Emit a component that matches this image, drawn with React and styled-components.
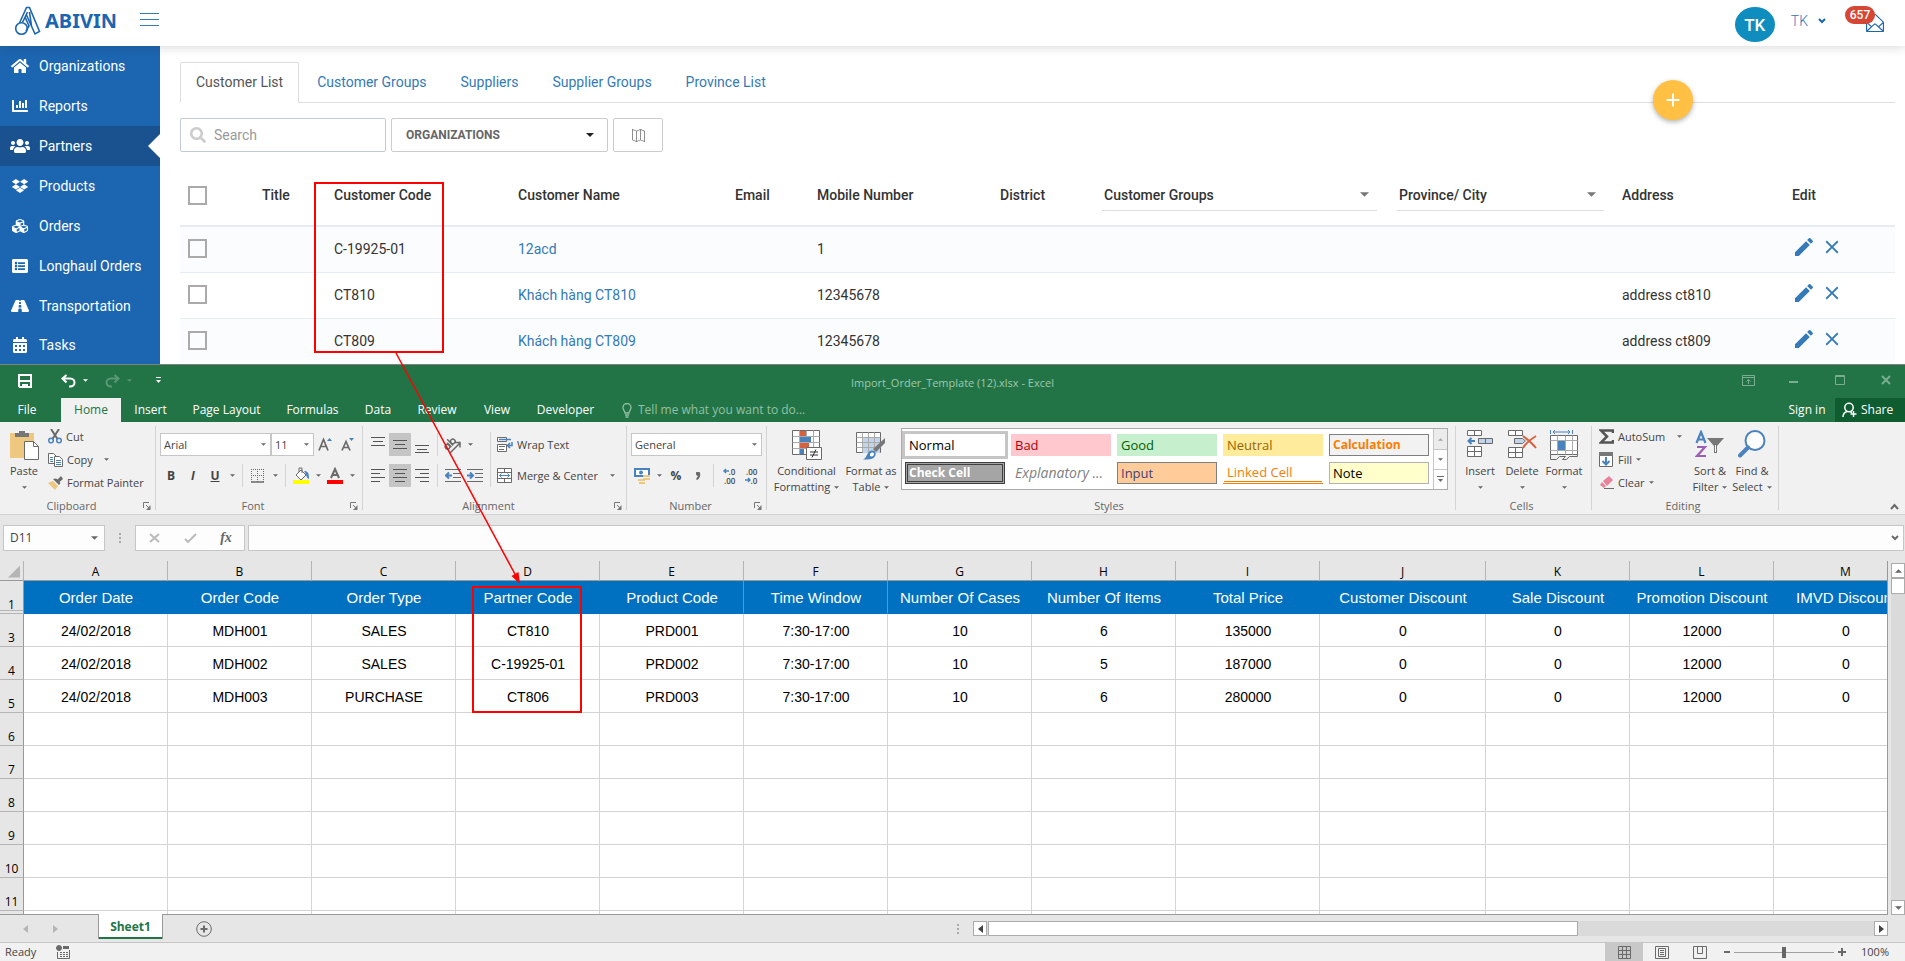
import React from 'react';
import styled, { createGlobalStyle, css } from 'styled-components';
import {
  FaHome,
  FaChartBar,
  FaUsers,
  FaDropbox,
  FaCubes,
  FaListAlt,
  FaRoad,
  FaCalendarAlt,
  FaSearch,
} from 'react-icons/fa';
import { MdEdit, MdClose, MdAdd } from 'react-icons/md';
import { SlMap, SlEnvelopeOpen } from 'react-icons/sl';

const colors = {
  brand: '#1c65b0',
  brandDark: '#19528f',
  link: '#337ab7',
  excel: '#227447',
  excelDark: '#0e5c2f',
  ribbon: '#f1f1f1',
  chrome: '#e6e6e6',
  line: '#d4d4d4',
  icon: '#6a6a6a',
  blue: '#4a82bd',
  sheetBlue: '#0070c0',
};

const GlobalStyle = createGlobalStyle`
  *, *::before, *::after {
    box-sizing: border-box;
  }
  body {
    margin: 0;
    background: #fff;
    font-family: Roboto, sans-serif;
    font-size: 14px;
  }
  button, input, select {
    font: inherit;
    color: inherit;
    margin: 0;
    padding: 0;
    border: 0;
    background: none;
  }
  svg {
    display: block;
    flex: none;
  }
`;

const Page = styled.div`
  position: relative;
  overflow: hidden;
`;

/* ---------- partner portal ---------- */

const Header = styled.header`
  position: relative;
  z-index: 1;
  display: flex;
  align-items: center;
  height: 46px;
  padding: 0 21px 0 14px;
  background: #fff;
  box-shadow: 0 1px 10px rgba(50, 50, 50, 0.2);
`;

const Brand = styled.a`
  display: flex;
  align-items: center;
  gap: 4px;
  height: 40px;
  padding-bottom: 5px;
  color: ${colors.brand};
  font: bold 20px 'Noto Sans', sans-serif;
  text-decoration: none;
`;

const MenuToggle = styled.button`
  display: grid;
  gap: 5px;
  width: 19px;
  margin: 0 auto 7px 23px;
  span {
    height: 1px;
    background: ${colors.link};
  }
`;

const Avatar = styled.span`
  display: grid;
  place-items: center;
  width: 40px;
  height: 35px;
  margin-top: 3px;
  border-radius: 50%;
  background: #0f8dbf;
  color: #fff;
  font-size: 17px;
  font-weight: 500;
`;

const UserMenu = styled.button`
  display: flex;
  align-items: center;
  gap: 10px;
  margin: 0 19px 4px 16px;
  color: ${colors.link};
  font-weight: 300;
`;

const Inbox = styled.button`
  display: flex;
  align-items: flex-start;
  height: 34px;
  color: ${colors.brand};
  svg {
    margin: 8px 0 0 -9px;
  }
`;

const Badge = styled.span`
  position: relative;
  z-index: 1;
  width: 30px;
  border-radius: 9px;
  background: #d64635;
  color: #fff;
  font-size: 12px;
  font-weight: 500;
  line-height: 18px;
`;

const Portal = styled.div`
  display: flex;
`;

const Sidebar = styled.nav`
  display: grid;
  grid-template-rows: repeat(7, 40px) 1fr;
  flex: none;
  width: 160px;
  background: ${colors.brand};
`;

const SideLink = styled.a`
  position: relative;
  display: flex;
  align-items: center;
  gap: 9px;
  padding-left: 10px;
  color: #fff;
  text-decoration: none;
  svg {
    width: 20px;
    height: 16px;
  }
  ${({ $active }) =>
    $active &&
    css`
      background: ${colors.brandDark};
      &::after {
        content: '';
        position: absolute;
        right: 0;
        width: 12px;
        height: 24px;
        background: #fff;
        clip-path: polygon(100% 0, 0 50%, 100% 100%);
      }
    `}
`;

const Main = styled.main`
  position: relative;
  flex: 1;
  min-width: 0;
  padding: 16px 10px 0 20px;
`;

const Tabs = styled.div`
  display: flex;
  border-bottom: 1px solid #ddd;
`;

const Tab = styled.a`
  height: 41px;
  margin: 0 2px -1px 0;
  padding: 0 15px;
  border: 1px solid transparent;
  border-radius: 2px 2px 0 0;
  color: ${colors.link};
  line-height: 38px;
  text-decoration: none;
  ${({ $active }) =>
    $active &&
    css`
      border-color: #ddd #ddd #fff;
      background: #fff;
      color: #555;
    `}
`;

const AddButton = styled.button`
  position: absolute;
  top: 34px;
  right: 212px;
  display: grid;
  place-items: center;
  width: 40px;
  height: 40px;
  border-radius: 50%;
  background: #ffc043;
  color: #fff;
  box-shadow: 0 2px 5px rgba(0, 0, 0, 0.3);
`;

const Filters = styled.div`
  display: flex;
  gap: 5px;
  margin-top: 15px;
`;

const filterBox = css`
  display: flex;
  align-items: center;
  height: 34px;
  border: 1px solid #ccc;
  border-radius: 2px;
  background: #fff;
`;

const SearchBox = styled.label`
  ${filterBox}
  gap: 8px;
  width: 206px;
  padding: 0 9px;
  border-color: #c2cad8;
  color: #ccc;
  input {
    width: 100%;
    outline: 0;
    color: #555;
  }
  input::placeholder {
    color: #999;
  }
`;

const SelectShell = styled.label`
  display: grid;
  align-items: center;
  > * {
    grid-area: 1 / 1;
  }
  > svg {
    justify-self: end;
    pointer-events: none;
  }
  select {
    width: 100%;
    height: 100%;
    appearance: none;
    outline: 0;
  }
`;

const OrgSelect = styled(SelectShell)`
  width: 217px;
  height: 34px;
  border: 1px solid #ccc;
  border-radius: 2px;
  color: #666;
  font-size: 12px;
  font-weight: 700;
  select {
    padding-left: 14px;
  }
  > svg {
    margin-right: 13px;
    color: #222;
  }
`;

const MapButton = styled.button`
  ${filterBox}
  justify-content: center;
  width: 50px;
  color: #777;
`;

const PartnerTable = styled.table`
  width: 100%;
  table-layout: fixed;
  border-collapse: separate;
  border-spacing: 0;
  color: #333;
  th,
  td {
    padding: 0 8px;
    text-align: left;
    white-space: nowrap;
  }
  th {
    height: 75px;
    padding-top: 13px;
    border-bottom: 2px solid #e7ecf1;
    font-weight: 500;
  }
  td {
    height: 46px;
    padding-bottom: 2px;
    border-bottom: 1px solid #e7ecf1;
  }
  tr:last-child td {
    height: 45px;
    border-bottom: 0;
  }
  tbody tr:nth-child(odd) {
    background: #fbfcfd;
  }
  a {
    color: ${colors.link};
    text-decoration: none;
  }
`;

const Tick = styled.input.attrs({ type: 'checkbox' })`
  display: block;
  width: 19px;
  height: 19px;
  appearance: none;
  border: 2px solid #aaa;
`;

const HeadSelect = styled(SelectShell)`
  height: 32px;
  margin-right: ${({ $gap }) => $gap}px;
  border-bottom: 1px solid #ddd;
  select {
    padding-left: 2px;
    font-weight: 500;
  }
  > svg {
    margin-right: 8px;
    color: #777;
  }
`;

const RowActions = styled.div`
  display: flex;
  gap: 5px;
  padding-bottom: 3px;
  color: ${colors.link};
  button {
    display: block;
  }
`;

/* ---------- spreadsheet window ---------- */

const Window = styled.section`
  border-top: 1px solid #808080;
  background: ${colors.chrome};
  font: 12px/16px 'Open Sans', 'Noto Sans', sans-serif;
  color: #444;
`;

const TitleBar = styled.div`
  display: grid;
  grid-template-columns: 1fr auto 1fr;
  align-items: center;
  height: 33px;
  background: ${colors.excel};
  color: #9fc8ae;
  font-size: 11px;
`;

const DocTitle = styled.span`
  padding-top: 3px;
`;

const QuickAccess = styled.div`
  display: flex;
  align-items: center;
  padding: 0 0 2px 18px;
  color: #fff;
`;

const QuickButton = styled.button`
  width: ${({ $width }) => $width}px;
  opacity: ${({ disabled }) => (disabled ? 0.25 : 1)};
`;

const WindowButtons = styled.div`
  display: flex;
  justify-content: flex-end;
  gap: 8px;
  padding-bottom: 3px;
  button {
    display: grid;
    place-items: center;
    width: 38px;
    height: 30px;
  }
`;

const RibbonTabs = styled.div`
  display: flex;
  align-items: stretch;
  height: 24px;
  background: ${colors.excel};
  color: #fff;
`;

const RibbonTab = styled.button`
  width: ${({ $width }) => $width}px;
  white-space: nowrap;
  &:first-child {
    margin-right: 7px;
  }
  ${({ $active }) =>
    $active &&
    css`
      background: ${colors.ribbon};
      color: ${colors.excel};
    `}
`;

const TellMe = styled.label`
  display: flex;
  align-items: center;
  gap: 6px;
  flex: 1;
  padding-left: 15px;
  color: #93c0a5;
  input {
    flex: 1;
    outline: 0;
  }
  input::placeholder {
    color: #93c0a5;
    opacity: 1;
  }
`;

const ShareButton = styled.button`
  display: flex;
  align-items: center;
  gap: 4px;
  width: 70px;
  padding-left: 7px;
  background: ${colors.excelDark};
`;

const Ribbon = styled.div`
  display: flex;
  height: 93px;
  border-bottom: 1px solid #d2d2d2;
  background: ${colors.ribbon};
`;

const Group = styled.div`
  display: flex;
  flex-direction: column;
  flex: none;
  width: ${({ $width }) => $width}px;
`;

const GroupBody = styled.div`
  display: flex;
  height: 74px;
  padding-left: ${({ $pad }) => $pad || 0}px;
`;

const GroupLabel = styled.div`
  display: flex;
  align-items: center;
  height: 18px;
  padding: 2px 4px 0 0;
  color: #666;
  font-size: 11px;
  span {
    flex: 1;
    text-align: center;
  }
`;

const Divider = styled.span`
  flex: none;
  width: 1px;
  margin: ${({ $inset }) => ($inset ? '10px 6px 9px 4px' : '4px 0')};
  background: ${colors.line};
`;

const BigButton = styled.button`
  display: flex;
  flex-direction: column;
  align-items: center;
  flex: none;
  width: ${({ $width }) => $width}px;
  padding-top: 8px;
  font-size: 11px;
  > svg:first-child {
    margin-bottom: 3px;
  }
`;

const BigLine = styled.span`
  display: flex;
  align-items: center;
  gap: 4px;
  height: 16px;
  white-space: nowrap;
`;

const SmallList = styled.div`
  display: flex;
  flex-direction: column;
  padding-top: 3px;
  width: ${({ $width }) => $width}px;
`;

const SmallButton = styled.button`
  display: flex;
  align-items: center;
  gap: 4px;
  height: 23px;
  font-size: 11px;
  white-space: nowrap;
  > svg:nth-of-type(2) {
    margin-left: ${({ $caretGap }) => $caretGap || 0}px;
  }
`;

const ToolRows = styled.div`
  display: flex;
  flex-direction: column;
  gap: 8px;
  padding-top: 11px;
`;

const ToolRow = styled.div`
  display: flex;
  height: 23px;
`;

const Tool = styled.button`
  display: grid;
  place-items: center;
  width: ${({ $narrow }) => ($narrow ? 12 : 22)}px;
  height: 23px;
  background: ${({ $on }) => ($on ? '#c5c5c5' : 'none')};
  font-weight: 700;
`;

const ToolSplit = styled.span`
  width: 1px;
  margin: 0 4px;
  background: ${colors.line};
`;

const Combo = styled(SelectShell)`
  width: ${({ $width }) => $width}px;
  height: 23px;
  border: 1px solid #c6c6c6;
  background: #fff;
  font-size: 11px;
  select {
    padding-left: 3px;
  }
  > svg {
    margin-right: 4px;
  }
`;

const Gallery = styled.div`
  display: flex;
  height: 62px;
  margin: 6px 0 0 1px;
  border: 1px solid #ababab;
  background: #fff;
`;

const Swatches = styled.div`
  display: grid;
  grid-template-columns: repeat(5, 100px);
  grid-auto-rows: 22px;
  gap: 6px;
  padding: 5px 4px 0 3px;
`;

const Swatch = styled.button`
  padding: 0 3px 1px;
  border: 1px solid ${({ $border }) => $border || 'transparent'};
  background: ${({ $bg }) => $bg || '#fff'};
  color: ${({ $color }) => $color || '#000'};
  font-size: 13px;
  text-align: left;
  white-space: nowrap;
  ${({ $picked }) => $picked && 'outline: 3px solid #c5c5c5;'}
  ${({ $bold }) => $bold && 'font-weight: 700; font-size: 12px;'}
  ${({ $italic }) => $italic && 'font-style: italic; font-size: 14px;'}
  ${({ $boxed }) =>
    $boxed && 'border: 1px solid #3f3f3f; box-shadow: inset 0 0 0 1px #a5a5a5, inset 0 0 0 2px #3f3f3f;'}
  ${({ $underlined }) => $underlined && 'border-bottom: 3px double #fa7d00;'}
`;

const GalleryScroll = styled.div`
  display: grid;
  grid-template-rows: 1fr 1fr 1fr;
  width: 14px;
  border-left: 1px solid #c6c6c6;
  button {
    display: grid;
    place-items: center;
  }
  button + button {
    border-top: 1px solid #c6c6c6;
  }
  button:disabled {
    background: #e1e1e1;
    opacity: 0.6;
  }
`;

const Collapse = styled.button`
  align-self: flex-end;
  margin: 0 6px 4px auto;
`;

const FormulaBar = styled.div`
  display: flex;
  height: 46px;
  padding: 10px 1px 10px 3px;
`;

const barBox = css`
  height: 26px;
  border: 1px solid #c6c6c6;
  background: #fdfdfd;
`;

const NameBox = styled(SelectShell)`
  ${barBox}
  width: 102px;
  input {
    width: 100%;
    padding-left: 6px;
    outline: 0;
  }
  > svg {
    margin-right: 6px;
  }
`;

const Grip = styled.span`
  align-self: center;
  width: 2px;
  height: 10px;
  margin: 0 14px;
  background: repeating-linear-gradient(#aaa 0 2px, transparent 2px 4px);
`;

const FormulaButtons = styled.div`
  ${barBox}
  display: flex;
  width: 110px;
  button {
    display: grid;
    place-items: center;
    flex: 1;
  }
`;

const FxButton = styled.button`
  color: #666;
  font: italic bold 14px 'Liberation Serif', serif;
`;

const FormulaInput = styled(SelectShell)`
  ${barBox}
  flex: 1;
  margin-left: 3px;
  input {
    width: 100%;
    padding: 0 20px 0 6px;
    outline: 0;
  }
  > svg {
    margin-right: 4px;
  }
`;

const SheetArea = styled.div`
  display: flex;
`;

const SheetView = styled.div`
  flex: 1;
  min-width: 0;
  height: 354px;
  overflow: hidden;
  border-right: 1px solid #999;
  border-bottom: 1px solid #999;
`;

const Sheet = styled.table`
  width: 1918px;
  table-layout: fixed;
  border-collapse: separate;
  border-spacing: 0;
  color: #000;
  thead th {
    height: 20px;
    padding: 2px 0 0;
    border-right: 1px solid #b5b5b5;
    border-bottom: 1px solid #999;
    background: ${colors.chrome};
    font-weight: 400;
  }
  tbody th {
    height: 33px;
    padding: 0;
    border-right: 1px solid #999;
    border-bottom: 1px solid #b5b5b5;
    background: ${colors.chrome};
    font-weight: 400;
    vertical-align: bottom;
  }
  td {
    padding: 1px 0 0 1px;
    overflow: hidden;
    border-right: 1px solid ${colors.line};
    border-bottom: 1px solid ${colors.line};
    background: #fff;
    font: 14px 'Liberation Sans', sans-serif;
    text-align: center;
    white-space: nowrap;
  }
`;

/* row 2 is hidden, so row 1 ends in a double rule */
const TitleRow = styled.tr`
  && th {
    box-shadow: inset 0 -2px ${colors.chrome}, inset 0 -3px #b5b5b5;
  }
  && td {
    border-color: ${colors.sheetBlue};
    background: ${colors.sheetBlue};
    color: #fff;
    font-size: 15px;
  }
  && td:nth-of-type(5),
  && td:nth-of-type(6) {
    border-right-color: #7f8c99;
  }
`;

const SelectAll = styled.span`
  display: block;
  width: 12px;
  height: 12px;
  margin-left: 8px;
  background: #b5b5b5;
  clip-path: polygon(100% 0, 100% 100%, 0 100%);
`;

const ScrollTrack = styled.div`
  display: flex;
  flex-direction: ${({ $horizontal }) => ($horizontal ? 'row' : 'column')};
  background: #dadada;
  ${({ $horizontal }) => ($horizontal ? 'width: 915px; height: 15px;' : 'width: 14px; margin: 2px 0 0 3px;')}
`;

const ScrollButton = styled.button`
  display: grid;
  place-items: center;
  flex: none;
  width: 14px;
  height: 15px;
  border: 1px solid #ababab;
  background: #fff;
`;

const ScrollThumb = styled.span`
  flex: none;
  border: 1px solid #ababab;
  background: #fff;
  ${({ $horizontal }) => ($horizontal ? 'width: 590px; margin: 0 auto 0 1px;' : 'height: 16px; margin-bottom: auto;')}
`;

const SheetTabs = styled.div`
  display: flex;
  align-items: center;
  height: 27px;
  padding-right: 17px;
`;

const SheetArrow = styled.button`
  width: 30px;
  padding-left: 23px;
  color: #b5b5b5;
`;

const SheetTab = styled.button`
  align-self: flex-start;
  width: 65px;
  height: 25px;
  margin: -1px 33px 0 38px;
  padding-top: 1px;
  border: solid #999;
  border-width: 0 1px;
  box-shadow: inset 0 -2px ${colors.excel};
  background: #fff;
  color: ${colors.excel};
  font-weight: 700;
`;

const AddSheet = styled.button`
  margin-right: auto;
`;

const StatusBar = styled.footer`
  display: flex;
  align-items: center;
  height: 19px;
  padding: 0 16px 0 5px;
  border-top: 1px solid #c6c6c6;
  background: ${colors.ribbon};
  font-size: 11px;
  > svg {
    margin: 0 auto 0 20px;
  }
`;

const ViewButton = styled.button`
  display: grid;
  place-items: center;
  width: 38px;
  height: 18px;
  background: ${({ $on }) => ($on ? '#c8c8c8' : 'none')};
`;

const ZoomButton = styled.button`
  display: grid;
  place-items: center;
  width: ${({ $width }) => $width}px;
  height: 16px;
`;

const ZoomSlider = styled.input.attrs({ type: 'range' })`
  width: 100px;
  height: 14px;
  appearance: none;
  background: linear-gradient(#a0a0a0, #a0a0a0) center / 100% 1px no-repeat;
  &::-webkit-slider-thumb {
    appearance: none;
    width: 4px;
    height: 11px;
    background: #666;
  }
`;

const ZoomLevel = styled.span`
  margin-left: 11px;
`;

const DecimalText = styled.span`
  display: flex;
  flex-direction: column;
  align-items: flex-end;
  font-size: 8px;
  font-weight: 600;
  line-height: 9px;
  span {
    display: flex;
    align-items: center;
  }
`;

const Annotations = styled.svg`
  position: absolute;
  top: 0;
  left: 0;
  pointer-events: none;
`;

/* ---------- icons ---------- */

const Icon = ({ w = 16, h = 16, children, ...rest }) => (
  <svg width={w} height={h} viewBox={`0 0 ${w} ${h}`} fill="none" stroke={colors.icon} {...rest}>
    {children}
  </svg>
);

const Caret = ({ size = 5, up, color = '#666' }) => (
  <svg width={size} height={Math.ceil(size / 2)} viewBox="0 0 10 5" fill={color}>
    <path d={up ? 'M0 5h10L5 0z' : 'M0 0h10L5 5z'} />
  </svg>
);

const SideCaret = ({ left }) => (
  <svg width="5" height="8" viewBox="0 0 5 8" fill="currentColor">
    <path d={left ? 'M5 0v8L0 4z' : 'M0 0v8l5-4z'} />
  </svg>
);

const Logo = () => (
  <Icon w={27} h={30} stroke={colors.brand} strokeWidth="1.6">
    <circle cx="7.5" cy="22.5" r="5.8" />
    <path d="M5.500 17L12.500 1.500h3L25.500 25.500l-4.500 2.500L12.500 9M8.500 16.500l5-10.500M12 25l3-5-4-9M15.500 6l2 14" />
  </Icon>
);

const Launcher = () => (
  <Icon w={8} h={8} stroke="#777">
    <path d="M.5 6V.5H6M3 3l3.500 3.500" />
    <path d="M7.500 3v5H3z" fill="#777" stroke="none" />
  </Icon>
);

const SaveIcon = () => (
  <Icon w={14} h={14} stroke="#fff" strokeWidth="2">
    <path d="M1 1h12v12H2l-1-1zM1 7h12" />
    <path d="M4 14v-4h6v4H8v-2H6v2z" fill="#fff" stroke="none" />
  </Icon>
);

const UndoIcon = ({ flip }) => (
  <Icon w={15} h={14} stroke="#fff" strokeWidth="2" transform={flip ? 'scale(-1 1)' : undefined}>
    <path d="M5.500 1L1.500 4.500l4 4M2 4.500h7c6 0 6 8 0 8H8" />
  </Icon>
);

const PasteIcon = () => (
  <Icon w={30} h={30}>
    <path d="M1 3h24v25H1z" fill="#edc87e" stroke="none" />
    <path d="M6 3h4V1h6v2h4v4H6z" fill="#777" stroke="none" />
    <path d="M15.500 11.500h9l5 5v13h-14z" fill="#fff" />
    <path d="M24.500 11.500v5h5" />
  </Icon>
);

const CutIcon = () => (
  <Icon w={14} h={15}>
    <path d="M3 0l6.500 10M11 0L4.500 10" strokeWidth="2" />
    <circle cx="3" cy="11.500" r="2.300" stroke={colors.blue} strokeWidth="1.500" />
    <circle cx="11" cy="11.500" r="2.300" stroke={colors.blue} strokeWidth="1.500" />
  </Icon>
);

const CopyIcon = () => (
  <Icon w={15} h={14}>
    <path d="M.5.5h5l3 3v7h-8z" fill="#fff" />
    <path d="M6.500 3.500h5l3 3v7h-8z" fill="#fff" />
    <path d="M2 4.500h3M2 6.500h3M2 8.500h3M8 7.500h5M8 9.500h5M8 11.500h5" stroke={colors.blue} />
  </Icon>
);

const PainterIcon = () => (
  <Icon w={15} h={14}>
    <path d="M0 7l5-2 5 5-3 4z" fill="#edc87e" stroke="none" />
    <path d="M5 3l6 6 1.500-2-1-1L15 3l-2-3-3.500 3.500L8 2.500z" fill={colors.icon} stroke="none" />
  </Icon>
);

const FontSizeIcon = ({ down }) => (
  <Icon w={14} h={15}>
    <path d={down ? 'M2 13.500l4-9 4 9M3.500 10.500h5' : 'M1 13.500L5.500 2.500l4.500 11M2.500 9.500h6'} strokeWidth="1.700" />
    <path d={down ? 'M9 1h5l-2.500 3z' : 'M9 4h5l-2.500-3z'} fill={colors.blue} stroke="none" />
  </Icon>
);

const BordersIcon = () => (
  <Icon w={14} h={14}>
    <path d="M.5 0v13M6.500 0v13M12.500 0v13M0 .5h13M0 6.500h13" strokeDasharray="1 1" />
    <path d="M0 13h13" strokeWidth="1.500" />
  </Icon>
);

const FillColorIcon = () => (
  <Icon w={17} h={17}>
    <path d="M3 8l5-5 5 5-5 5zM6 5V1h3v5" fill="#fff" />
    <path d="M11 4c4 0 5 2 5 8-3-1-2-4-5-8z" fill={colors.blue} stroke="none" />
    <path d="M0 13h16v4H0z" fill="#ff0" stroke="none" />
  </Icon>
);

const FontColorIcon = () => (
  <Icon w={16} h={17}>
    <path d="M4 11L8 2l4 9M5.500 8h5" strokeWidth="2" />
    <path d="M0 13h16v4H0z" fill="#f00" stroke="none" />
  </Icon>
);

const alignPaths = {
  top: 'M0 1.500h14M2 5.500h10M0 9.500h14',
  middle: 'M0 4.500h14M2 8.500h10M0 12.500h14',
  bottom: 'M0 9.500h14M2 13.500h10M0 16.500h14',
  left: 'M0 2.500h14M0 6.500h9M0 10.500h14M0 14.500h9',
  center: 'M0 2.500h14M2 6.500h10M0 10.500h14M2 14.500h10',
  right: 'M0 2.500h14M5 6.500h9M0 10.500h14M5 14.500h9',
};

const AlignIcon = ({ kind }) => (
  <Icon w={14} h={17} stroke="#555">
    <path d={alignPaths[kind]} />
  </Icon>
);

const OrientationIcon = () => (
  <Icon w={18} h={18}>
    <g transform="rotate(-45 6 9)" strokeWidth="1.500">
      <circle cx="3" cy="8.500" r="2.300" />
      <path d="M5.500 5.500v6M8 3v8.500" />
      <circle cx="10.500" cy="8.500" r="2.300" />
    </g>
    <path d="M6 17L16 7M11 6.500h5v5" strokeWidth="1.500" />
  </Icon>
);

const IndentIcon = ({ right }) => (
  <Icon w={17} h={14}>
    <path d="M0 .5h16M8 4.500h8M8 8.500h8M0 12.500h16" />
    <path d={right ? 'M0 6.500h6M3 3.500l3 3-3 3' : 'M7 6.500H1M4 3.500l-3 3 3 3'} stroke={colors.blue} strokeWidth="2" />
  </Icon>
);

const WrapIcon = () => (
  <Icon w={16} h={16}>
    <path d="M.5.5h9v4h-9zM.5 7.500h9v7h-9zM2 9.500h6M2 12.500h5" fill="#fff" />
    <path d="M2 2.500h12M15 5v3.500h-4M13 6l-2.500 2.500L13 11" stroke={colors.blue} strokeWidth="1.500" />
  </Icon>
);

const MergeIcon = () => (
  <Icon w={16} h={15}>
    <path d="M.5.5h14v14H.5zM.5 4.500h14M.5 10.500h14M7.500.5v4M7.500 10.500v4" fill="#fff" />
    <path d="M2.500 7.500h10M4.500 5.500l-2 2 2 2M10.500 5.500l2 2-2 2" stroke={colors.blue} />
  </Icon>
);

const MoneyIcon = () => (
  <Icon w={17} h={16}>
    <path d="M0 0h16v9H0z" fill={colors.blue} stroke="none" />
    <path d="M2 2h12v5H2z" fill="#fff" stroke="none" />
    <circle cx="7" cy="4.500" r="2" fill={colors.blue} stroke="none" />
    <path d="M9 7h7v2H9zM9 10h7v2H9zM4 11h7v2H4zM5 14h6v2H5z" fill="#edc87e" stroke="none" />
  </Icon>
);

const DecimalArrow = ({ right }) => (
  <Icon w={6} h={6} stroke={colors.blue} strokeWidth="1.500">
    <path d={right ? 'M0 3h5M3 1l2 2-2 2' : 'M6 3H1M3 1L1 3l2 2'} />
  </Icon>
);

const ConditionalIcon = () => (
  <Icon w={30} h={30}>
    <path d="M.5.5h27v24H.5z" fill="#fff" />
    <path d="M.5 6.500h27M.5 12.500h27M.5 18.500h27M7.500.5v24M14.500.5v24M21.500.5v24" stroke="#aaa" />
    <path d="M8 1h6v5H8zM8 13h9v5H8z" fill="#d9603f" stroke="none" />
    <path d="M8 7h11v5H8zM8 19h4v5H8z" fill={colors.blue} stroke="none" />
    <path d="M14.500 17.500h15v12h-15z" fill="#fff" />
    <path d="M18 22h8M18 25h8M24 19.500l-4 8" stroke="#333" />
  </Icon>
);

const FormatTableIcon = () => (
  <Icon w={30} h={30}>
    <path d="M.5 2.500h24v20H.5z" fill="#fff" />
    <path d="M7 8h17v15H7z" fill="#c2d4ea" stroke="none" />
    <path d="M.5 7.500h24M.5 12.500h24M.5 17.500h24M6.500 2.500v20M12.500 2.500v20M18.500 2.500v20" stroke="#aaa" />
    <path d="M29 8v5l-9 9-3-3z" fill="#777" stroke="none" />
    <path d="M7 29.500c4-1 4-9 9-9 4 0 5 4 2 7-2 2-6 2-11 2z" fill={colors.blue} stroke="none" />
    <path d="M14 24c1-2 4-2 4 0s-2 3-4 2z" fill="#fff" stroke="none" />
  </Icon>
);

const InsertIcon = () => (
  <Icon w={28} h={30}>
    <path d="M1.500.5h14v5h-14zM8.500.5v5M1.500 16.500h14v10h-14zM8.500 16.500v10M1.500 21.500h14" fill="#fff" />
    <path d="M12.500 8.500h14v5h-14zM19.500 8.500v5" fill="#c2d4ea" />
    <path d="M9 11H3M5.500 8l-3 3 3 3" stroke={colors.blue} strokeWidth="2" />
  </Icon>
);

const DeleteIcon = () => (
  <Icon w={30} h={30}>
    <path d="M1.500.5h14v5h-14zM8.500.5v5M1.500 17.500h14v10h-14zM8.500 17.500v10M1.500 22.500h14" fill="#fff" />
    <path d="M7.500 8.500h8l3 2.500-3 2.500h-8z" fill="#c2d4ea" />
    <path d="M16 6c4 3 9 7 13 12M29 6c-5 3-10 7-13 12" stroke="#d9603f" strokeWidth="2" />
  </Icon>
);

const FormatCellsIcon = () => (
  <Icon w={28} h={30}>
    <path d="M.5 5.500h27v19H.5z" fill="#fff" />
    <path d="M.5 10.500h27M.5 20.500h27M7.500 5.500v19M15.500 5.500v19M22.500 5.500v19" stroke="#aaa" />
    <path d="M8 11h7v9H8z" fill={colors.blue} stroke="none" />
    <path d="M.5 24.500v5h6l3-3h6l-3 3h4l3-3h8v-2" />
    <path d="M.5 0v4M22.500 0v4M3 2h17M5 0L3 2l2 2M18 0l2 2-2 2" stroke={colors.blue} />
  </Icon>
);

const SumIcon = () => (
  <Icon w={15} h={15} strokeWidth="2.500" stroke="#555">
    <path d="M14 4V1.500H2l6 6-6 6h12V11" />
  </Icon>
);

const FillIcon = () => (
  <Icon w={15} h={16}>
    <path d="M.5.5h13v14H.5z" fill="#fff" />
    <path d="M0 0h14v4H0z" fill="#777" stroke="none" />
    <path d="M7 5v7M3.500 9L7 12.500 10.500 9" stroke={colors.blue} strokeWidth="2" />
  </Icon>
);

const EraserIcon = () => (
  <Icon w={15} h={14}>
    <path d="M4 5l6-5 4 4-6 6z" fill="#e8829a" stroke="none" />
    <path d="M3 6l4 4-2 2-4-3z" fill="#e8829a" stroke="none" />
    <path d="M5 12.500h10" />
  </Icon>
);

const SortIcon = () => (
  <Icon w={30} h={30} strokeWidth="2.200">
    <path d="M1.500 13L6 2l4.500 11M3 9.500h6" stroke={colors.blue} />
    <path d="M2 17h8L2 26h9" stroke="#9a5fb5" />
    <path d="M12 8h17l-7 8v7h-3v-7z" fill="#777" stroke="none" />
    <path d="M20.500 15v7" stroke="#fff" strokeWidth="1" />
  </Icon>
);

const FindIcon = () => (
  <Icon w={28} h={30} stroke={colors.blue}>
    <circle cx="17" cy="10.500" r="9.500" fill="#fff" strokeWidth="2" />
    <path d="M10 17.500l-8 8" strokeWidth="4" strokeLinecap="round" />
  </Icon>
);

const BulbIcon = () => (
  <Icon w={10} h={15} stroke="#93c0a5" strokeWidth="1.300">
    <path d="M3 10c0-2-2-3-2-5.500a4 4 0 018 0C9 7 7 8 7 10zM3 12h4M3.500 14h3" />
  </Icon>
);

const ShareIcon = () => (
  <Icon w={15} h={16} stroke="#fff" strokeWidth="1.500">
    <circle cx="7" cy="5.500" r="4.200" />
    <path d="M1 15c0-3 2-5 4.500-5.500M8 9.500l2 1M11.500 9v6M8.500 12h6" />
  </Icon>
);

const PlusCircle = () => (
  <Icon w={16} h={16}>
    <circle cx="8" cy="8" r="7.300" />
    <path d="M4.500 8h7M8 4.500v7" strokeWidth="2" />
  </Icon>
);

/* ---------- data ---------- */

const sideItems = [
  ['Organizations', FaHome],
  ['Reports', FaChartBar],
  ['Partners', FaUsers],
  ['Products', FaDropbox],
  ['Orders', FaCubes],
  ['Longhaul Orders', FaListAlt],
  ['Transportation', FaRoad],
  ['Tasks', FaCalendarAlt],
];

const portalTabs = ['Customer List', 'Customer Groups', 'Suppliers', 'Supplier Groups', 'Province List'];

const partnerColumns = [74, 72, 184, 217, 82, 183, 102, 295, 225, 170, 111];

const partners = [
  { code: 'C-19925-01', name: '12acd', mobile: '1', address: '' },
  { code: 'CT810', name: 'Khách hàng CT810', mobile: '12345678', address: 'address ct810' },
  { code: 'CT809', name: 'Khách hàng CT809', mobile: '12345678', address: 'address ct809' },
];

const ribbonTabs = [
  ['File', 54],
  ['Home', 60],
  ['Insert', 59],
  ['Page Layout', 93],
  ['Formulas', 79],
  ['Data', 52],
  ['Review', 66],
  ['View', 54],
  ['Developer', 83],
];

const cellStyles = [
  { label: 'Normal', $picked: true },
  { label: 'Bad', $bg: '#ffc7ce', $color: '#b0000f' },
  { label: 'Good', $bg: '#c6efce', $color: '#006100' },
  { label: 'Neutral', $bg: '#ffeb9c', $color: '#9c6500' },
  { label: 'Calculation', $bg: '#f2f2f2', $color: '#fa7d00', $border: '#7f7f7f', $bold: true },
  { label: 'Check Cell', $bg: '#a5a5a5', $color: '#fff', $bold: true, $boxed: true },
  { label: 'Explanatory ...', $color: '#7f7f7f', $italic: true },
  { label: 'Input', $bg: '#ffcc99', $color: '#3f3f76', $border: '#7f7f7f' },
  { label: 'Linked Cell', $color: '#fa7d00', $underlined: true },
  { label: 'Note', $bg: '#ffffcc', $border: '#b2b2b2' },
];

const sheetColumns = 'ABCDEFGHIJKLM'.split('');

const sheetTitles = [
  'Order Date',
  'Order Code',
  'Order Type',
  'Partner Code',
  'Product Code',
  'Time Window',
  'Number Of Cases',
  'Number Of Items',
  'Total Price',
  'Customer Discount',
  'Sale Discount',
  'Promotion Discount',
  'IMVD Discount',
];

const sheetRows = {
  3: ['24/02/2018', 'MDH001', 'SALES', 'CT810', 'PRD001', '7:30-17:00', 10, 6, 135000, 0, 0, 12000, 0],
  4: ['24/02/2018', 'MDH002', 'SALES', 'C-19925-01', 'PRD002', '7:30-17:00', 10, 5, 187000, 0, 0, 12000, 0],
  5: ['24/02/2018', 'MDH003', 'PURCHASE', 'CT806', 'PRD003', '7:30-17:00', 10, 6, 280000, 0, 0, 12000, 0],
};

// the blank entry is the sliver of a row under row 11
const rowNumbers = [3, 4, 5, 6, 7, 8, 9, 10, 11, ''];

/* ---------- parts ---------- */

const PortalHeader = () => (
  <Header>
    <Brand href="#">
      <Logo />
      ABIVIN
    </Brand>
    <MenuToggle aria-label="Toggle menu">
      <span />
      <span />
      <span />
    </MenuToggle>
    <Avatar>TK</Avatar>
    <UserMenu>
      TK
      <Icon w={8} h={6} stroke={colors.brand} strokeWidth="2">
        <path d="M1 1l3 3 3-3" />
      </Icon>
    </UserMenu>
    <Inbox aria-label="Inbox">
      <Badge>657</Badge>
      <SlEnvelopeOpen size={18} />
    </Inbox>
  </Header>
);

const PartnersTable = () => (
  <PartnerTable>
    <colgroup>
      {partnerColumns.map((width, i) => (
        <col key={i} width={width} />
      ))}
    </colgroup>
    <thead>
      <tr>
        <th>
          <Tick aria-label="Select all" />
        </th>
        <th>Title</th>
        <th>Customer Code</th>
        <th>Customer Name</th>
        <th>Email</th>
        <th>Mobile Number</th>
        <th>District</th>
        <th>
          <HeadSelect $gap={4}>
            <select aria-label="Customer Groups">
              <option>Customer Groups</option>
            </select>
            <Caret size={9} color="#777" />
          </HeadSelect>
        </th>
        <th>
          <HeadSelect $gap={2}>
            <select aria-label="Province/ City">
              <option>Province/ City</option>
            </select>
            <Caret size={9} color="#777" />
          </HeadSelect>
        </th>
        <th>Address</th>
        <th>Edit</th>
      </tr>
    </thead>
    <tbody>
      {partners.map(({ code, name, mobile, address }) => (
        <tr key={code}>
          <td>
            <Tick aria-label={`Select ${code}`} />
          </td>
          <td />
          <td>{code}</td>
          <td>
            <a href="#">{name}</a>
          </td>
          <td />
          <td>{mobile}</td>
          <td />
          <td />
          <td />
          <td>{address}</td>
          <td>
            <RowActions>
              <button aria-label={`Edit ${code}`}>
                <MdEdit size={24} />
              </button>
              <button aria-label={`Delete ${code}`}>
                <MdClose size={22} />
              </button>
            </RowActions>
          </td>
        </tr>
      ))}
    </tbody>
  </PartnerTable>
);

const RibbonGroup = ({ label, width, pad, launcher, children }) => (
  <>
    <Group $width={width}>
      <GroupBody $pad={pad}>{children}</GroupBody>
      <GroupLabel>
        <span>{label}</span>
        {launcher && <Launcher />}
      </GroupLabel>
    </Group>
    <Divider />
  </>
);

const CaretTool = ({ label }) => (
  <Tool $narrow aria-label={label}>
    <Caret />
  </Tool>
);

const RibbonPanel = () => (
  <Ribbon>
    <RibbonGroup label="Clipboard" width={155} launcher>
      <BigButton $width={48}>
        <PasteIcon />
        <BigLine>Paste</BigLine>
        <BigLine>
          <Caret />
        </BigLine>
      </BigButton>
      <SmallList>
        <SmallButton>
          <CutIcon />
          Cut
        </SmallButton>
        <SmallButton $caretGap={7}>
          <CopyIcon />
          Copy
          <Caret />
        </SmallButton>
        <SmallButton>
          <PainterIcon />
          Format Painter
        </SmallButton>
      </SmallList>
    </RibbonGroup>

    <RibbonGroup label="Font" width={206} pad={4} launcher>
      <ToolRows>
        <ToolRow>
          <Combo $width={111}>
            <select aria-label="Font">
              <option>Arial</option>
            </select>
            <Caret />
          </Combo>
          <Combo $width={43}>
            <select aria-label="Font size">
              <option>11</option>
            </select>
            <Caret />
          </Combo>
          <Tool aria-label="Increase font size">
            <FontSizeIcon />
          </Tool>
          <Tool aria-label="Decrease font size">
            <FontSizeIcon down />
          </Tool>
        </ToolRow>
        <ToolRow>
          <Tool>B</Tool>
          <Tool>
            <i>I</i>
          </Tool>
          <Tool>
            <u>U</u>
          </Tool>
          <CaretTool label="Underline options" />
          <ToolSplit />
          <Tool aria-label="Borders">
            <BordersIcon />
          </Tool>
          <CaretTool label="Border options" />
          <ToolSplit />
          <Tool aria-label="Fill color">
            <FillColorIcon />
          </Tool>
          <CaretTool label="Fill color options" />
          <Tool aria-label="Font color">
            <FontColorIcon />
          </Tool>
          <CaretTool label="Font color options" />
        </ToolRow>
      </ToolRows>
    </RibbonGroup>

    <RibbonGroup label="Alignment" width={263} pad={4} launcher>
      <ToolRows>
        <ToolRow>
          {['top', 'middle', 'bottom'].map((kind) => (
            <Tool key={kind} $on={kind === 'middle'} aria-label={`Align ${kind}`}>
              <AlignIcon kind={kind} />
            </Tool>
          ))}
          <ToolSplit />
          <Tool aria-label="Orientation">
            <OrientationIcon />
          </Tool>
          <CaretTool label="Orientation options" />
        </ToolRow>
        <ToolRow>
          {['left', 'center', 'right'].map((kind) => (
            <Tool key={kind} $on={kind === 'center'} aria-label={`Align ${kind}`}>
              <AlignIcon kind={kind} />
            </Tool>
          ))}
          <ToolSplit />
          <Tool aria-label="Decrease indent">
            <IndentIcon />
          </Tool>
          <Tool aria-label="Increase indent">
            <IndentIcon right />
          </Tool>
        </ToolRow>
      </ToolRows>
      <Divider $inset />
      <ToolRows>
        <SmallButton>
          <WrapIcon />
          Wrap Text
        </SmallButton>
        <SmallButton $caretGap={8}>
          <MergeIcon />
          Merge &amp; Center
          <Caret />
        </SmallButton>
      </ToolRows>
    </RibbonGroup>

    <RibbonGroup label="Number" width={139} pad={4} launcher>
      <ToolRows>
        <ToolRow>
          <Combo $width={131}>
            <select aria-label="Number format">
              <option>General</option>
            </select>
            <Caret />
          </Combo>
        </ToolRow>
        <ToolRow>
          <Tool aria-label="Accounting format">
            <MoneyIcon />
          </Tool>
          <CaretTool label="Accounting options" />
          <Tool>%</Tool>
          <Tool aria-label="Comma style">
            <Icon w={5} h={8}>
              <path d="M0 2a2 2 0 014-1c1 3-1 6-3 7l-1-1 2-3C1 4 0 3 0 2z" fill={colors.icon} stroke="none" />
            </Icon>
          </Tool>
          <ToolSplit />
          <Tool>
            <DecimalText>
              <span>
                <DecimalArrow />
                .0
              </span>
              <span>.00</span>
            </DecimalText>
          </Tool>
          <Tool>
            <DecimalText>
              <span>.00</span>
              <span>
                <DecimalArrow right />
                .0
              </span>
            </DecimalText>
          </Tool>
        </ToolRow>
      </ToolRows>
    </RibbonGroup>

    <RibbonGroup label="Styles" width={688} pad={4}>
      <BigButton $width={71}>
        <ConditionalIcon />
        <BigLine>Conditional</BigLine>
        <BigLine>
          Formatting
          <Caret />
        </BigLine>
      </BigButton>
      <BigButton $width={58}>
        <FormatTableIcon />
        <BigLine>Format as</BigLine>
        <BigLine>
          Table
          <Caret />
        </BigLine>
      </BigButton>
      <Gallery>
        <Swatches>
          {cellStyles.map(({ label, ...look }) => (
            <Swatch key={label} {...look}>
              {label}
            </Swatch>
          ))}
        </Swatches>
        <GalleryScroll>
          <button disabled aria-label="Previous styles">
            <Caret up />
          </button>
          <button aria-label="Next styles">
            <Caret />
          </button>
          <button aria-label="More styles">
            <Icon w={7} h={7}>
              <path d="M0 .5h7" />
              <path d="M1 3h5L3.500 6z" fill={colors.icon} stroke="none" />
            </Icon>
          </button>
        </GalleryScroll>
      </Gallery>
    </RibbonGroup>

    <RibbonGroup label="Cells" width={135} pad={3}>
      {[
        ['Insert', InsertIcon],
        ['Delete', DeleteIcon],
        ['Format', FormatCellsIcon],
      ].map(([label, Picture]) => (
        <BigButton key={label} $width={42}>
          <Picture />
          <BigLine>{label}</BigLine>
          <BigLine>
            <Caret />
          </BigLine>
        </BigButton>
      ))}
    </RibbonGroup>

    <RibbonGroup label="Editing" width={186} pad={7}>
      <SmallList $width={90}>
        <SmallButton $caretGap={8}>
          <SumIcon />
          AutoSum
          <Caret />
        </SmallButton>
        <SmallButton>
          <FillIcon />
          Fill
          <Caret />
        </SmallButton>
        <SmallButton>
          <EraserIcon />
          Clear
          <Caret />
        </SmallButton>
      </SmallList>
      <BigButton $width={42}>
        <SortIcon />
        <BigLine>Sort &amp;</BigLine>
        <BigLine>
          Filter
          <Caret />
        </BigLine>
      </BigButton>
      <BigButton $width={42}>
        <FindIcon />
        <BigLine>Find &amp;</BigLine>
        <BigLine>
          Select
          <Caret />
        </BigLine>
      </BigButton>
    </RibbonGroup>

    <Collapse aria-label="Collapse ribbon">
      <Icon w={9} h={7} strokeWidth="2">
        <path d="M1 6l3.500-4L8 6" />
      </Icon>
    </Collapse>
  </Ribbon>
);

const Spreadsheet = () => (
  <SheetArea>
    <SheetView>
      <Sheet>
        <colgroup>
          <col width={24} />
          {sheetColumns.map((name) => (
            <col key={name} width={name === 'J' ? 166 : 144} />
          ))}
        </colgroup>
        <thead>
          <tr>
            <th aria-label="Select all">
              <SelectAll />
            </th>
            {sheetColumns.map((name) => (
              <th key={name}>{name}</th>
            ))}
          </tr>
        </thead>
        <tbody>
          <TitleRow>
            <th>1</th>
            {sheetTitles.map((title) => (
              <td key={title}>{title}</td>
            ))}
          </TitleRow>
          {rowNumbers.map((number) => (
            <tr key={number}>
              <th>{number}</th>
              {sheetColumns.map((name, i) => (
                <td key={name}>{sheetRows[number]?.[i]}</td>
              ))}
            </tr>
          ))}
        </tbody>
      </Sheet>
    </SheetView>
    <ScrollTrack>
      <ScrollButton aria-label="Scroll up">
        <Caret size={7} up />
      </ScrollButton>
      <ScrollThumb />
      <ScrollButton aria-label="Scroll down">
        <Caret size={7} />
      </ScrollButton>
    </ScrollTrack>
  </SheetArea>
);

const ExcelWindow = () => (
  <Window>
    <TitleBar>
      <QuickAccess>
        <QuickButton $width={43} aria-label="Save">
          <SaveIcon />
        </QuickButton>
        <QuickButton $width={22} aria-label="Undo">
          <UndoIcon />
        </QuickButton>
        <QuickButton $width={22} aria-label="Undo options">
          <Caret color="#fff" />
        </QuickButton>
        <QuickButton $width={22} disabled aria-label="Redo">
          <UndoIcon flip />
        </QuickButton>
        <QuickButton $width={29} disabled aria-label="Redo options">
          <Caret color="#fff" />
        </QuickButton>
        <QuickButton $width={10} aria-label="Customize toolbar">
          <Icon w={5} h={7} stroke="#fff">
            <path d="M0 .5h5" />
            <path d="M0 3h5L2.500 6z" fill="#fff" stroke="none" />
          </Icon>
        </QuickButton>
      </QuickAccess>
      <DocTitle>Import_Order_Template (12).xlsx - Excel</DocTitle>
      <WindowButtons>
        <button aria-label="Ribbon display options">
          <Icon w={13} h={11} stroke="#7aae90">
            <path d="M.5.5h12v10H.5zM.5 2.500h12M6.500 9V4.500M4.500 6.500l2-2 2 2" />
          </Icon>
        </button>
        <button aria-label="Minimize">
          <Icon w={10} h={10} stroke="#7aae90" strokeWidth="2">
            <path d="M0 7h9" />
          </Icon>
        </button>
        <button aria-label="Maximize">
          <Icon w={10} h={10} stroke="#7aae90">
            <path d="M.5.5h9v9h-9zM0 1.500h10" />
          </Icon>
        </button>
        <button aria-label="Close">
          <Icon w={10} h={10} stroke="#7aae90" strokeWidth="2">
            <path d="M1 1l8 8M9 1L1 9" />
          </Icon>
        </button>
      </WindowButtons>
    </TitleBar>

    <RibbonTabs>
      {ribbonTabs.map(([label, width]) => (
        <RibbonTab key={label} $width={width} $active={label === 'Home'}>
          {label}
        </RibbonTab>
      ))}
      <TellMe>
        <BulbIcon />
        <input aria-label="Tell me" placeholder="Tell me what you want to do..." />
      </TellMe>
      <RibbonTab $width={56}>Sign in</RibbonTab>
      <ShareButton>
        <ShareIcon />
        Share
      </ShareButton>
    </RibbonTabs>

    <RibbonPanel />

    <FormulaBar>
      <NameBox>
        <input aria-label="Name box" defaultValue="D11" />
        <Caret size={7} />
      </NameBox>
      <Grip />
      <FormulaButtons>
        <button aria-label="Cancel">
          <Icon w={11} h={10} stroke="#bbb" strokeWidth="2">
            <path d="M1 1l9 8M10 1L1 9" />
          </Icon>
        </button>
        <button aria-label="Enter">
          <Icon w={13} h={10} stroke="#bbb" strokeWidth="2">
            <path d="M1 6l3 3 8-8" />
          </Icon>
        </button>
        <FxButton>fx</FxButton>
      </FormulaButtons>
      <FormulaInput>
        <input aria-label="Formula" />
        <Icon w={8} h={6} strokeWidth="2">
          <path d="M1 1l3 3 3-3" />
        </Icon>
      </FormulaInput>
    </FormulaBar>

    <Spreadsheet />

    <SheetTabs>
      <SheetArrow aria-label="Previous sheet">
        <SideCaret left />
      </SheetArrow>
      <SheetArrow aria-label="Next sheet">
        <SideCaret />
      </SheetArrow>
      <SheetTab>Sheet1</SheetTab>
      <AddSheet aria-label="New sheet">
        <PlusCircle />
      </AddSheet>
      <Grip />
      <ScrollTrack $horizontal>
        <ScrollButton aria-label="Scroll left">
          <SideCaret left />
        </ScrollButton>
        <ScrollThumb $horizontal />
        <ScrollButton aria-label="Scroll right">
          <SideCaret />
        </ScrollButton>
      </ScrollTrack>
    </SheetTabs>

    <StatusBar>
      Ready
      <Icon w={14} h={14}>
        <circle cx="3" cy="3" r="2.500" fill={colors.icon} />
        <path d="M7 2.500h6" strokeWidth="3" />
        <path d="M1.500 7v6.500h12V5" />
        <path d="M4 7.500h8M4 9.500h8M4 11.500h8" strokeDasharray="2 1" />
      </Icon>
      <ViewButton $on aria-label="Normal view">
        <Icon w={13} h={13}>
          <path d="M.5.5h12v12H.5zM.5 4.500h12M.5 8.500h12M4.500.5v12M8.500.5v12" />
        </Icon>
      </ViewButton>
      <ViewButton aria-label="Page layout view">
        <Icon w={14} h={13}>
          <path d="M.5.5h13v12H.5zM3.500 2.500h7v8h-7zM5 4.500h4M5 6.500h4M5 8.500h4" />
        </Icon>
      </ViewButton>
      <ViewButton aria-label="Page break view">
        <Icon w={14} h={13}>
          <path d="M.5.5h13v12H.5zM4.500.5v7h5v-7" />
        </Icon>
      </ViewButton>
      <ZoomButton $width={15} aria-label="Zoom out">
        <Icon w={6} h={8} strokeWidth="2">
          <path d="M0 4h6" />
        </Icon>
      </ZoomButton>
      <ZoomSlider aria-label="Zoom" defaultValue={50} />
      <ZoomButton $width={16} aria-label="Zoom in">
        <Icon w={8} h={8} strokeWidth="2">
          <path d="M0 4h8M4 0v8" />
        </Icon>
      </ZoomButton>
      <ZoomLevel>100%</ZoomLevel>
    </StatusBar>
  </Window>
);

const App = () => (
  <Page>
    <GlobalStyle />
    <PortalHeader />
    <Portal>
      <Sidebar>
        {sideItems.map(([label, Glyph]) => (
          <SideLink key={label} href="#" $active={label === 'Partners'}>
            <Glyph />
            {label}
          </SideLink>
        ))}
      </Sidebar>
      <Main>
        <Tabs>
          {portalTabs.map((label, i) => (
            <Tab key={label} href="#" $active={i === 0}>
              {label}
            </Tab>
          ))}
        </Tabs>
        <AddButton aria-label="Add customer">
          <MdAdd size={22} />
        </AddButton>
        <Filters>
          <SearchBox>
            <FaSearch size={16} />
            <input placeholder="Search" aria-label="Search" />
          </SearchBox>
          <OrgSelect>
            <select aria-label="Organizations">
              <option>ORGANIZATIONS</option>
            </select>
            <Caret size={8} color="#222" />
          </OrgSelect>
          <MapButton aria-label="Show map">
            <SlMap size={13} />
          </MapButton>
        </Filters>
        <PartnersTable />
      </Main>
    </Portal>
    <ExcelWindow />
    <Annotations width="1905" height="961" fill="none" stroke="#f00" strokeWidth="2">
      <rect x="315" y="183" width="128" height="169" />
      <rect x="473" y="587" width="108" height="125" />
      <path d="M396 353L516 576" strokeWidth="1.500" />
      <path d="M520 584l-8.500-8 7-4z" fill="#f00" stroke="none" />
    </Annotations>
  </Page>
);

export default App;
